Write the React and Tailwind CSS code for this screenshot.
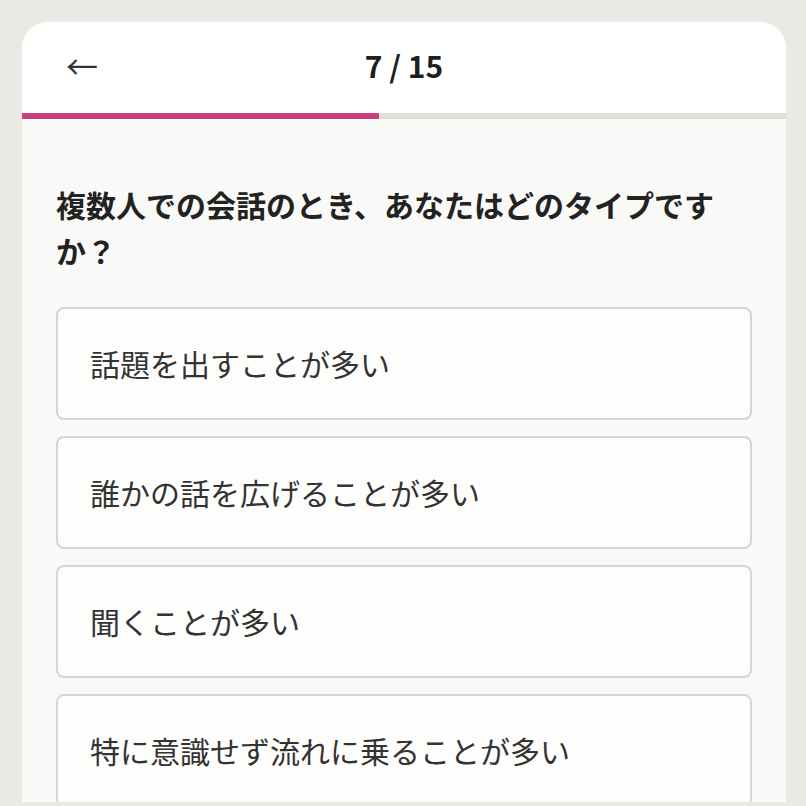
import React from "react";

const options = [
  "話題を出すことが多い",
  "誰かの話を広げることが多い",
  "聞くことが多い",
  "特に意識せず流れに乗ることが多い",
];

export default function App() {
  const current = 7;
  const total = 15;

  return (
    <div
      className="w-[806px] h-[806px] bg-[#ebe9e4] pt-[22px] pl-[22px] overflow-hidden"
      style={{ fontFamily: '"Noto Sans CJK JP", "Noto Sans", sans-serif' }}
    >
      <div className="w-[764px] h-[780px] rounded-t-[26px] overflow-hidden bg-[#f9f9f7] flex flex-col">
        {/* ヘッダー */}
        <div className="h-[91px] shrink-0 bg-white grid grid-cols-[1fr_auto_1fr] items-center pl-[44px] pb-[5px]">
          <button className="justify-self-start text-[32px] leading-none text-[#333]">
            ←
          </button>
          <div className="text-[30px] font-bold leading-none text-[#1f1f1f] -ml-[44px]">
            {current} / {total}
          </div>
          <div />
        </div>

        {/* プログレスバー */}
        <div className="h-[6px] shrink-0 bg-[#e2dfd8]">
          <div
            className="h-full bg-[#c8417a]"
            style={{ width: `${(current / total) * 100}%` }}
          />
        </div>

        <div className="px-[34px] pt-[62px]">
          <h2 className="text-[30px] font-bold leading-[46px] text-[#222]">
            複数人での会話のとき、あなたはどのタイプですか？
          </h2>

          <div className="mt-[34px] flex flex-col gap-[16px]">
            {options.map((o) => (
              <button
                key={o}
                className="h-[113px] shrink-0 w-full text-left px-[32px] bg-[#fdfdfc] border-2 border-[#d6d5d2] rounded-[8px] text-[30px] text-[#333]"
              >
                {o}
              </button>
            ))}
          </div>
        </div>
      </div>
    </div>
  );
}
